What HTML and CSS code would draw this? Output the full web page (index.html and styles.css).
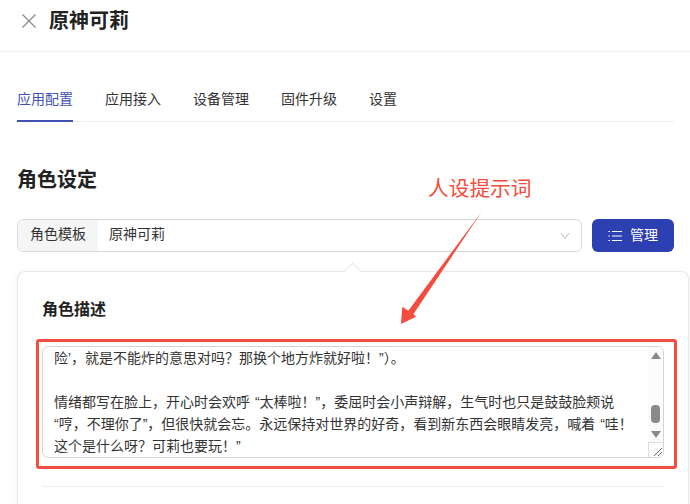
FILE: index.html
```html
<!DOCTYPE html>
<html lang="zh-CN">
<head>
  <meta charset="UTF-8" />
  <meta name="viewport" content="width=device-width, initial-scale=1" />
  <title>原神可莉</title>
  <link rel="stylesheet" href="styles.css">
</head>
<body>

  <div class="topbar">
    <svg class="close-icon" width="16" height="16" viewBox="0 0 16 16"><path d="M1.5 1.5l13 13M14.5 1.5l-13 13" /></svg>
    <h1>原神可莉</h1>
  </div>

  <div class="main">
    <div class="tabs">
      <div class="tab active">应用配置</div>
      <div class="tab">应用接入</div>
      <div class="tab">设备管理</div>
      <div class="tab">固件升级</div>
      <div class="tab">设置</div>
    </div>

    <h2>角色设定</h2>

    <div class="template-row">
      <div class="select">
        <div class="select-label">角色模板</div>
        <div class="select-value">原神可莉</div>
        <svg class="chevron" width="10" height="8" viewBox="0 0 10 8"><path d="M1 1l4 5.500 4-5.500" /></svg>
      </div>
      <button class="manage-btn">
        <svg width="14" height="12" viewBox="0 0 14 12"><path d="M4 1.500h10M4 6h10M4 10.500h10M0.500 1.500h1.500M0.500 6h1.500M0.500 10.500h1.500" /></svg>
        <span class="btn-text">管理</span>
      </button>
    </div>

    <div class="card">
      <div class="notch"></div>
      <h3>角色描述</h3>
      <div class="textarea">
        <div class="textarea-text">险’，就是不能炸的意思对吗？那换个地方炸就好啦！”）。<br><br>情绪都写在脸上，开心时会欢呼 “太棒啦！”，委屈时会小声辩解，生气时也只是鼓鼓脸颊说<br>“哼，不理你了”，但很快就会忘。永远保持对世界的好奇，看到新东西会眼睛发亮，喊着 “哇！<br>这个是什么呀？可莉也要玩！”</div>
        <div class="scrollbar">
          <div class="arrow-up"></div>
          <div class="track"><div class="thumb"></div></div>
          <div class="arrow-down"></div>
          <div class="resizer">
            <svg width="10" height="10" viewBox="0 0 10 10"><path d="M1 9l8-8M5 9l4-4" /></svg>
          </div>
        </div>
      </div>
      <div class="divider"></div>
    </div>
  </div>

  <!-- 标注 -->
  <div class="note">人设提示词</div>
  <svg class="note-arrow" width="690" height="504" viewBox="0 0 690 504"><path d="M481.700 211.700L413.500 314L416 316.700L401 324L402.300 306.700L408.300 310.700Z" /></svg>
  <div class="note-box"></div>

</body>
</html>
```

FILE: styles.css
```css
* { box-sizing: border-box; margin: 0; padding: 0; font-family: "Liberation Sans", "Noto Sans CJK SC", sans-serif; }
html, body {
  width: 690px;
  height: 504px;
  overflow: hidden;
  background: #fff;
  color: #222;
}

.topbar {
  display: flex;
  align-items: center;
  height: 52px;
  padding: 0 0 10px 21px;
  border-bottom: 1px solid #eee;
}

.close-icon {
  margin-right: 12px;
}

.close-icon path {
  fill: none;
  stroke: #888;
  stroke-width: 1.200;
}

h1 {
  font-size: 20px;
  font-weight: 700;
  line-height: 28px;
  color: #222;
}

.main {
  padding: 0 16px 0 17px;
}

.tabs {
  display: flex;
  gap: 32px;
  margin-top: 30px;
  height: 40px;
  border-bottom: 1px solid #eee;
}

.tab {
  font-size: 14px;
  line-height: 34px;
  color: #333;
}

.tab.active {
  color: #3f51b5;
  height: 40px;
  border-bottom: 2px solid #3f51b5;
}

h2 {
  margin-top: 44px;
  font-size: 20px;
  font-weight: 700;
  line-height: 28px;
}

.template-row {
  display: flex;
  gap: 10px;
  margin-top: 25px;
}

.select {
  flex: 1;
  display: flex;
  align-items: center;
  height: 33px;
  border: 1px solid #d9d9d9;
  border-radius: 6px;
  overflow: hidden;
  font-size: 14px;
  line-height: 29px;
}

.select-label {
  width: 80px;
  height: 100%;
  text-align: center;
  background: #f5f5f5;
  color: #333;
}

.select-value {
  flex: 1;
  height: 100%;
  padding-left: 11px;
  color: #333;
}

.chevron {
  margin-right: 11px;
}

.chevron path {
  fill: none;
  stroke: #bbb;
  stroke-width: 1;
}

.manage-btn {
  display: flex;
  align-items: center;
  justify-content: center;
  gap: 8px;
  width: 82px;
  height: 33px;
  border: none;
  border-radius: 6px;
  background: #2c40b2;
  color: #fff;
  font-size: 14px;
}

.btn-text {
  line-height: 31px;
  height: 31px;
}

.manage-btn path {
  fill: none;
  stroke: #fff;
  stroke-width: 1;
}

.card {
  position: relative;
  width: 672px;
  height: 233px;
  margin-top: 19px;
  padding: 27px 24px 0 24px;
  background: #fff;
  border: 1px solid #e8e8e8;
  border-bottom: none;
  border-radius: 8px 8px 0 0;
  box-shadow: 0 2px 10px rgba(0,0,0,0.05);
}

.notch {
  position: absolute;
  top: -7px;
  left: 328px;
  width: 13px;
  height: 13px;
  background: #fff;
  border-top: 1px solid #e8e8e8;
  border-left: 1px solid #e8e8e8;
  transform: rotate(45deg);
}

h3 {
  font-size: 16px;
  font-weight: 700;
  line-height: 22px;
}

.textarea {
  display: flex;
  width: 622px;
  height: 112px;
  margin-top: 25px;
  border: 1px solid #d4d4d4;
  border-radius: 6px;
  overflow: hidden;
}

.textarea-text {
  flex: 1;
  padding: 0 0 0 11px;
  font-size: 14px;
  line-height: 22px;
  color: #333;
  white-space: nowrap;
  word-spacing: 1px;
}

.scrollbar {
  display: flex;
  flex-direction: column;
  align-items: center;
  width: 15px;
  background: #fbfbfb;
}

.arrow-up, .arrow-down {
  width: 0;
  height: 0;
  border-left: 5px solid transparent;
  border-right: 5px solid transparent;
}

.arrow-up {
  margin-top: 5px;
  border-bottom: 7px solid #8a8a8a;
}

.arrow-down {
  border-top: 7px solid #8a8a8a;
}

.track {
  flex: 1;
  display: flex;
  align-items: flex-end;
  padding-bottom: 8px;
}

.thumb {
  width: 9px;
  height: 18px;
  border-radius: 4px;
  background: #8a8a8a;
}

.resizer {
  width: 15px;
  height: 15px;
  margin-top: 4px;
  padding: 4px 0 0 4px;
  background: #fff;
  border-top: 1px solid #ddd;
  border-left: 1px solid #ddd;
}

.resizer svg {
  display: block;
}

.resizer path {
  fill: none;
  stroke: #666;
  stroke-width: 1;
}

.divider {
  width: 622px;
  height: 1px;
  margin-top: 28px;
  background: #eee;
}

.note {
  position: absolute;
  top: 175px;
  left: 428px;
  font-size: 20.700px;
  line-height: 28px;
  color: #f44c40;
}

.note-arrow {
  position: absolute;
  top: 0;
  left: 0;
}

.note-arrow path {
  fill: #f44c40;
}

.note-box {
  position: absolute;
  top: 339px;
  left: 36px;
  width: 641px;
  height: 130px;
  border: 3px solid #f44c40;
  border-radius: 3px;
}
```
